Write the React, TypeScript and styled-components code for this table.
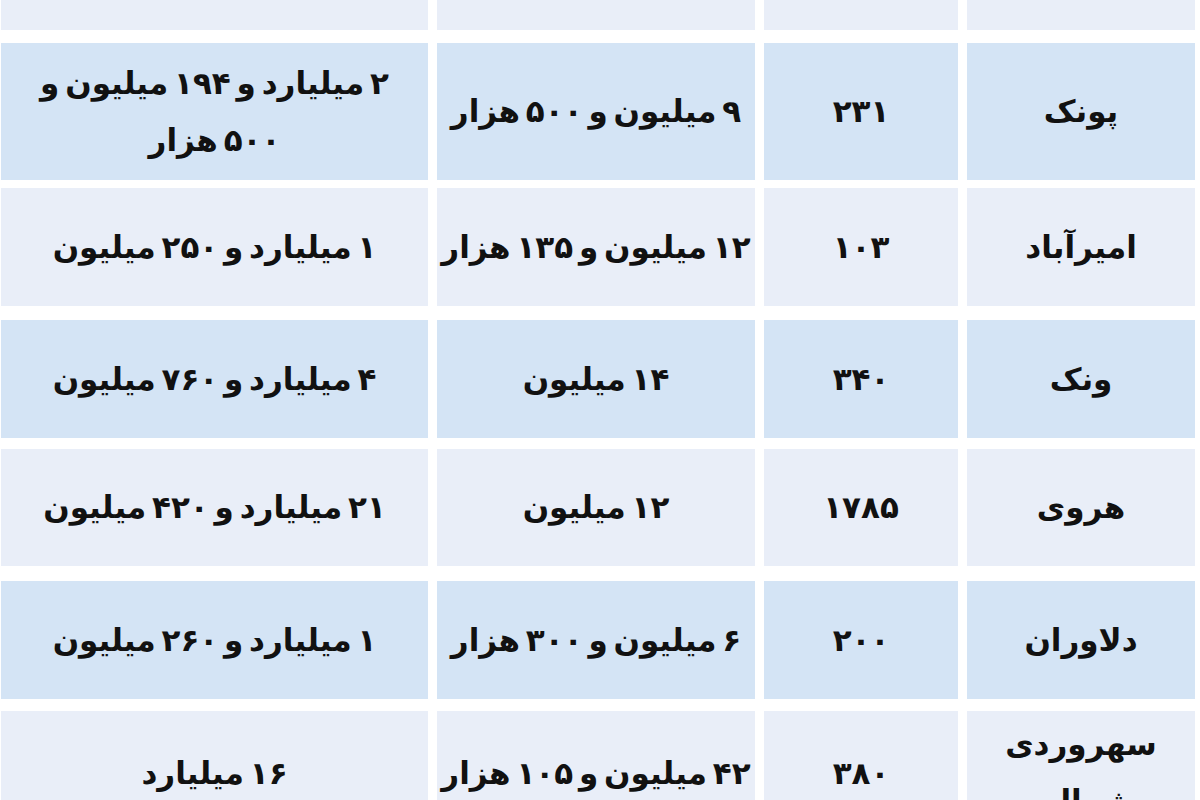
import styled, { createGlobalStyle } from 'styled-components';

const GlobalStyle = createGlobalStyle`
  html, body {
    margin: 0;
    padding: 0;
    background: #ffffff;
    overflow: hidden;
  }
  body {
    width: 1200px;
    height: 800px;
    font-family: "DejaVu Sans", "Noto Sans", sans-serif;
  }
`;

const Page = styled.div`
  width: 1200px;
  height: 800px;
  overflow: hidden;
  background: #ffffff;
`;

const Table = styled.div`
  width: 1195px;
  display: flex;
  flex-direction: column;
  direction: rtl;
`;

const Row = styled.div<{ $height: number; $gap: number }>`
  display: grid;
  grid-template-columns: 228px 194px 318px 427px;
  column-gap: 9px;
  height: ${(p) => p.$height}px;
  margin-top: ${(p) => p.$gap}px;
  flex-shrink: 0;
`;

const Cell = styled.div<{ $tone: 'blue' | 'pale' }>`
  display: flex;
  align-items: center;
  justify-content: center;
  text-align: center;
  overflow: hidden;
  background: ${(p) => (p.$tone === 'blue' ? '#d4e4f5' : '#e9eef8')};
  color: #111111;
  font-size: 31px;
  font-weight: bold;
  line-height: 57px;
  white-space: nowrap;
  word-spacing: -5px;
`;

type Line = {
  name: string[];
  count: string;
  price: string;
  total: string[];
  height: number;
  gap: number;
};

const rows: Line[] = [
  { name: ['پونک'], count: '۲۳۱', price: '۹ میلیون و ۵۰۰ هزار', total: ['۲ میلیارد و ۱۹۴ میلیون و', '۵۰۰ هزار'], height: 137, gap: 13 },
  { name: ['امیرآباد'], count: '۱۰۳', price: '۱۲ میلیون و ۱۳۵ هزار', total: ['۱ میلیارد و ۲۵۰ میلیون'], height: 118, gap: 8 },
  { name: ['ونک'], count: '۳۴۰', price: '۱۴ میلیون', total: ['۴ میلیارد و ۷۶۰ میلیون'], height: 118, gap: 14 },
  { name: ['هروی'], count: '۱۷۸۵', price: '۱۲ میلیون', total: ['۲۱ میلیارد و ۴۲۰ میلیون'], height: 117, gap: 11 },
  { name: ['دلاوران'], count: '۲۰۰', price: '۶ میلیون و ۳۰۰ هزار', total: ['۱ میلیارد و ۲۶۰ میلیون'], height: 118, gap: 15 },
  { name: ['سهروردی', 'شمالی'], count: '۳۸۰', price: '۴۲ میلیون و ۱۰۵ هزار', total: ['۱۶ میلیارد'], height: 124, gap: 12 },
];

function Lines({ parts }: { parts: string[] }) {
  return (
    <div>
      {parts.map((p, i) => (
        <div key={i}>{p}</div>
      ))}
    </div>
  );
}

export default function App() {
  return (
    <Page>
      <GlobalStyle />
      <Table>
        <Row $height={30} $gap={0}>
          <Cell $tone="pale" />
          <Cell $tone="pale" />
          <Cell $tone="pale" />
          <Cell $tone="pale" />
        </Row>
        {rows.map((r, i) => {
          const tone = i % 2 === 0 ? 'blue' : 'pale';
          return (
            <Row key={i} $height={r.height} $gap={r.gap}>
              <Cell $tone={tone}>
                <Lines parts={r.name} />
              </Cell>
              <Cell $tone={tone}>{r.count}</Cell>
              <Cell $tone={tone}>{r.price}</Cell>
              <Cell $tone={tone}>
                <Lines parts={r.total} />
              </Cell>
            </Row>
          );
        })}
      </Table>
    </Page>
  );
}
